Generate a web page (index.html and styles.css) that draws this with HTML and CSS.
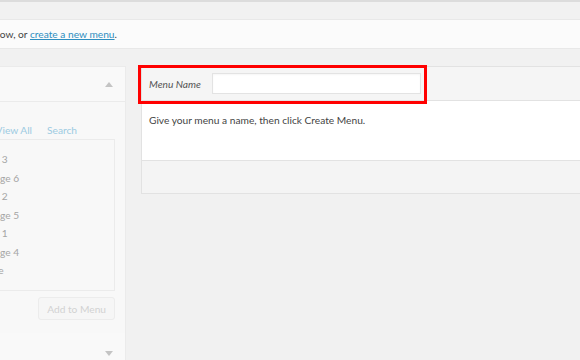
FILE: index.html
```html
<!DOCTYPE html>
<html lang="en">
<head>
    <meta charset="UTF-8">
    <title>Menus</title>
    <link rel="stylesheet" href="styles.css">
</head>
<body>
    <div class="page">
        <div class="top-rule"></div>
        <div class="notice">Edit your menu below, or <a href="#">create a new menu</a>.</div>

        <div class="columns">
            <div class="sidebar">
                <div class="section">
                    <div class="section-title"><span>Pages</span><span class="arrow up"></span></div>
                    <div class="section-body">
                        <div class="tabs">
                            <a href="#">Most Recent</a>
                            <a href="#">View All</a>
                            <a href="#">Search</a>
                        </div>
                        <ul class="checklist">
                            <li class="sub">Sub Page 3</li>
                            <li>Page 6</li>
                            <li class="sub">Sub Page 2</li>
                            <li>Page 5</li>
                            <li class="sub">Sub Page 1</li>
                            <li>Page 4</li>
                            <li class="far">Sample Page</li>
                        </ul>
                        <div class="actions">
                            <button disabled>Add to Menu</button>
                        </div>
                    </div>
                </div>
                <div class="section">
                    <div class="section-title"><span>Posts</span><span class="arrow down"></span></div>
                </div>
            </div>

            <div class="menu-edit">
                <div class="menu-header">
                    <label class="menu-name-label" for="menu-name">Menu Name</label>
                    <input id="menu-name" type="text">
                    <div class="highlight"></div>
                </div>
                <div class="menu-body">
                    <p>Give your menu a name, then click Create Menu.</p>
                </div>
                <div class="menu-footer"></div>
            </div>
        </div>
    </div>
</body>
</html>
```

FILE: styles.css
```css
:root {
    --bg-color: #f1f1f1;
    --border-color: #e5e5e5;
    --text-color: #444;
    --link-color: #0073aa;
}

body {
    margin: 0;
    background-color: var(--bg-color);
    color: var(--text-color);
    font-family: Lato, 'Open Sans', sans-serif;
    font-size: 10.2px;
    overflow: hidden;
}

.page {
    margin-left: -160px;
    width: 760px;
}

.top-rule {
    height: 2px;
    background-color: #dcdcdc;
}

.notice {
    margin-top: 17px;
    height: 28px;
    line-height: 29px;
    padding-left: 76px;
    background-color: #fbfbfb;
    border-top: 1px solid #e8e8e8;
    border-bottom: 1px solid #e8e8e8;
    font-size: 10.2px;
}

.notice a {
    color: #2e8ec0;
}

.columns {
    display: flex;
    gap: 15px;
    margin-top: 17px;
}

/* left column, faded while no menu exists */
.sidebar {
    width: 284px;
    flex-shrink: 0;
    border: 1px solid #ebebeb;
    border-bottom: none;
    background-color: #f8f8f8;
}

.section-title {
    display: flex;
    justify-content: space-between;
    align-items: center;
    height: 34px;
    padding: 0 12px 0 10px;
    border-bottom: 1px solid #ebebeb;
    color: #ccc;
    background-color: #f9f9f9;
}

.arrow {
    width: 0;
    height: 0;
    border-left: 4px solid transparent;
    border-right: 4px solid transparent;
}

.arrow.up {
    border-bottom: 5px solid #c4c4c4;
}

.arrow.down {
    border-top: 5px solid #c4c4c4;
    margin-top: 7px;
}

.section-body {
    padding: 22px 10px 13px 10px;
}

.tabs {
    display: flex;
    gap: 15px;
    padding-left: 73px;
    font-size: 10.2px;
}

.tabs a {
    color: #9ccbe2;
    text-decoration: none;
}

.checklist {
    list-style: none;
    margin: 3px 0 0 0;
    padding: 10px 0 8px 10px;
    height: 132px;
    border: 1px solid #ebebeb;
    background-color: #f8f8f8;
    color: #a5a5a5;
    font-size: 10.2px;
}

.checklist li {
    height: 18.5px;
    line-height: 18.5px;
    padding-left: 127px;
}

.checklist li.sub {
    padding-left: 96px;
}

.checklist li.far {
    padding-left: 85px;
}

.actions {
    display: flex;
    justify-content: flex-end;
    margin-top: 6px;
}

.actions button {
    height: 23px;
    padding: 0 8px;
    border: 1px solid #ececec;
    border-radius: 3px;
    background-color: #f6f6f6;
    color: #d2d2d2;
    font-family: inherit;
    font-size: 10.2px;
}

/* right column */
.menu-edit {
    flex: 1;
    align-self: flex-start;
    border: 1px solid #e2e2e2;
    background-color: #fff;
}

.menu-header {
    position: relative;
    display: flex;
    align-items: center;
    gap: 11px;
    height: 33px;
    padding-left: 7px;
    background-color: #f5f5f5;
    border-bottom: 1px solid #e2e2e2;
}

.menu-name-label {
    font-style: italic;
    color: #555;
    font-size: 10.2px;
}

.menu-header input {
    width: 207px;
    height: 19px;
    margin: 0;
    padding: 0;
    border: 1px solid #e3e3e3;
    background-color: #fff;
    box-shadow: inset 0 1px 2px rgba(0, 0, 0, 0.04);
}

.highlight {
    position: absolute;
    left: -4px;
    top: -2px;
    width: 283px;
    height: 33px;
    border: 3px solid #f00;
}

.menu-body {
    height: 46px;
    padding: 13px 7px 0 7px;
}

.menu-body p {
    margin: 0;
    font-size: 10.2px;
}

.menu-footer {
    height: 32px;
    background-color: #f4f4f4;
    border-top: 1px solid #e2e2e2;
}
```
